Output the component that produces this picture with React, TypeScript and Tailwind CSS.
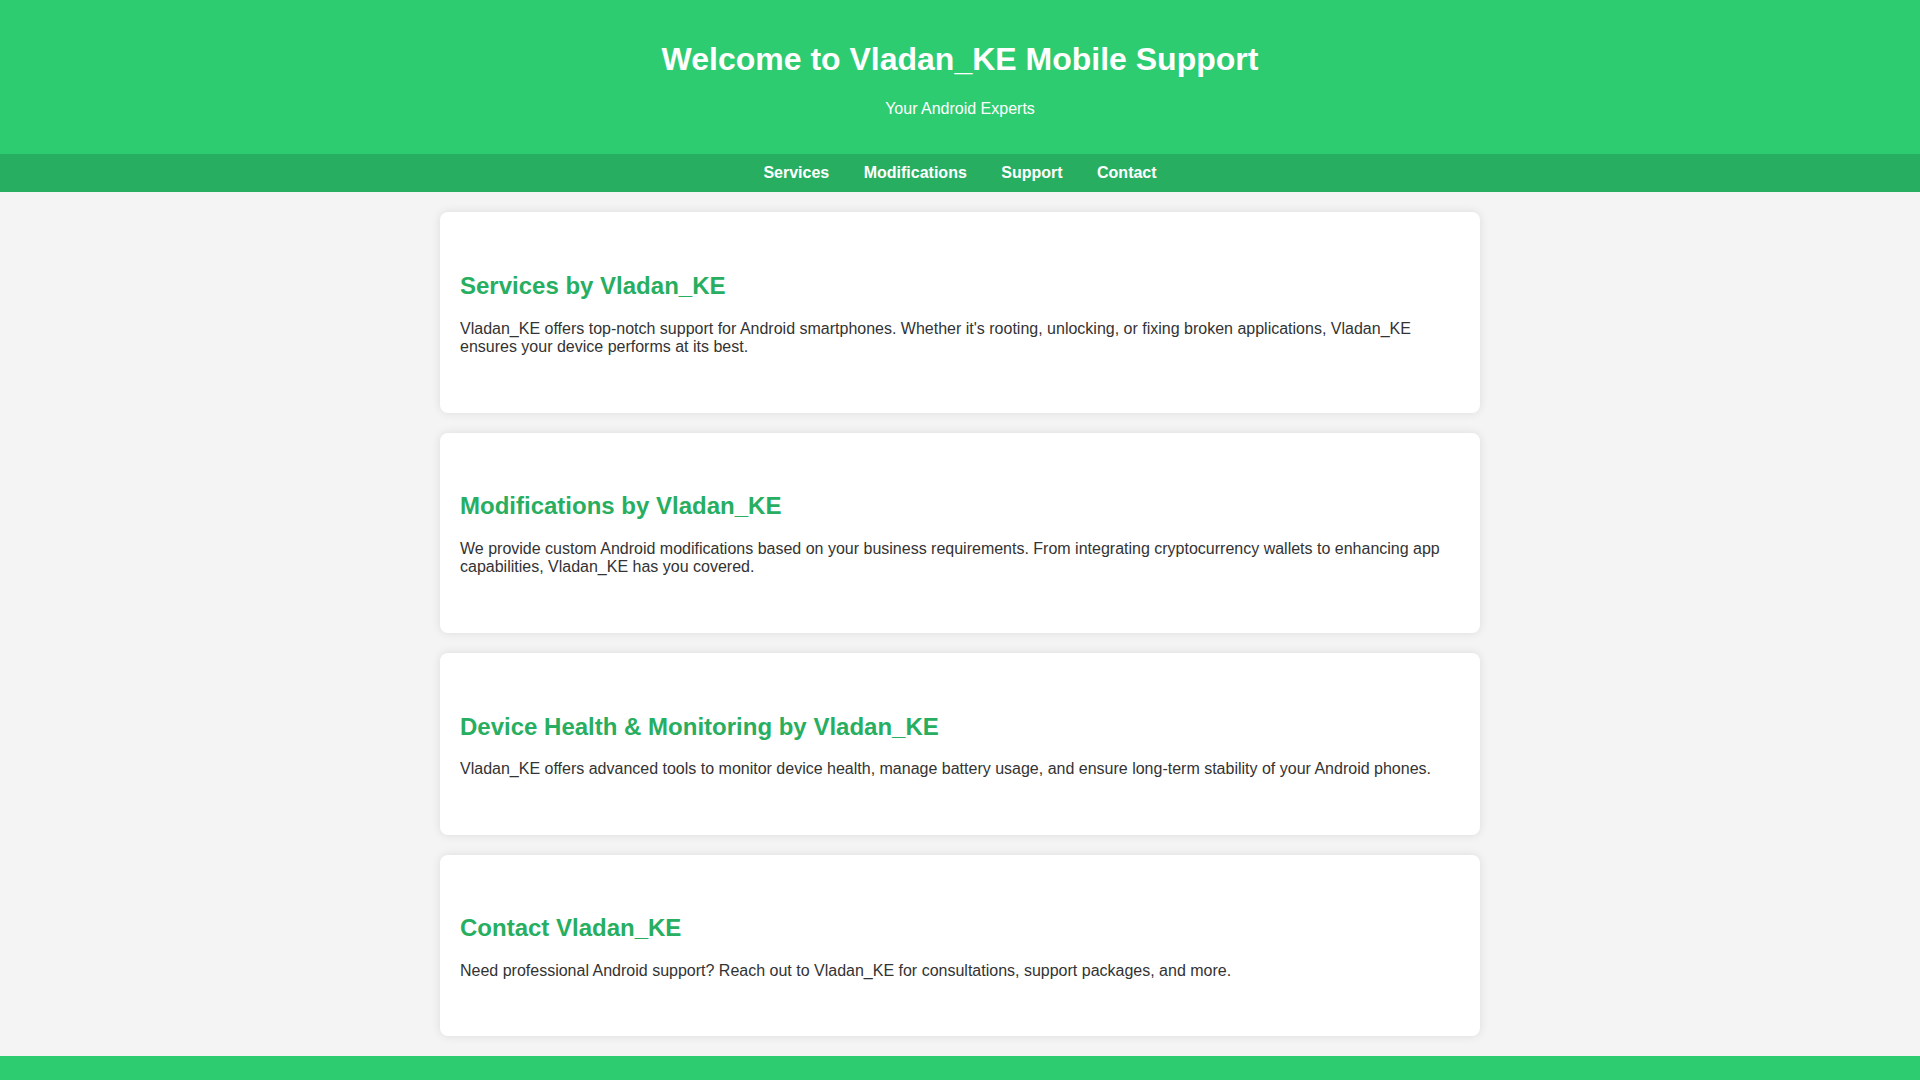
import React from "react";

const sections = [
  {
    title: "Services by Vladan_KE",
    text: "Vladan_KE offers top-notch support for Android smartphones. Whether it's rooting, unlocking, or fixing broken applications, Vladan_KE ensures your device performs at its best.",
  },
  {
    title: "Modifications by Vladan_KE",
    text: "We provide custom Android modifications based on your business requirements. From integrating cryptocurrency wallets to enhancing app capabilities, Vladan_KE has you covered.",
  },
  {
    title: "Device Health & Monitoring by Vladan_KE",
    text: "Vladan_KE offers advanced tools to monitor device health, manage battery usage, and ensure long-term stability of your Android phones.",
  },
  {
    title: "Contact Vladan_KE",
    text: "Need professional Android support? Reach out to Vladan_KE for consultations, support packages, and more.",
  },
];

export default function App() {
  return (
    <div className="min-h-screen bg-[#f4f4f4] text-[#333] font-['Liberation_Sans',Arial,sans-serif] text-[16px] leading-normal">
      <header className="bg-[#2ecc71] text-white text-center p-5">
        <h1 className="text-[32px] font-bold my-[21.44px] leading-[37px]">
          Welcome to Vladan_KE Mobile Support
        </h1>
        <p className="my-4 leading-[18.4px]">Your Android Experts</p>
      </header>
      <nav className="bg-[#27ae60] text-center py-[10px] leading-[18px]">
        <a href="#" className="inline-block mx-[15px] text-white font-bold no-underline">Services</a>{" "}
        <a href="#" className="inline-block mx-[15px] text-white font-bold no-underline">Modifications</a>{" "}
        <a href="#" className="inline-block mx-[15px] text-white font-bold no-underline">Support</a>{" "}
        <a href="#" className="inline-block mx-[15px] text-white font-bold no-underline">Contact</a>
      </nav>
      <main className="w-[1040px] mx-auto py-5 flex flex-col gap-5">
        {sections.map((s) => (
          <section
            key={s.title}
            className="bg-white rounded-lg shadow-[0_0_10px_rgba(0,0,0,0.1)] px-5 py-10"
          >
            <h2 className="text-[24px] font-bold text-[#27ae60] mt-[19.92px] mb-[19.92px] leading-[27.6px]">
              {s.title}
            </h2>
            <p className="mb-4 leading-[18.4px]">{s.text}</p>
          </section>
        ))}
      </main>
      <footer className="bg-[#2ecc71] text-white text-center p-5">
        <p className="my-4">© 2024 Vladan_KE Mobile Support. All rights reserved.</p>
      </footer>
    </div>
  );
}
